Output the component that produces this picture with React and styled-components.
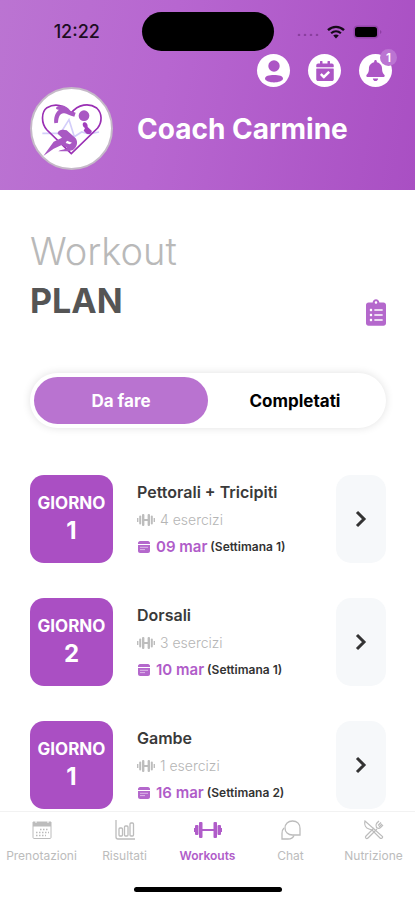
import React from "react";
import { useState } from "react";
import styled, { createGlobalStyle } from "styled-components";
import { FaBell, FaCalendarCheck, FaClipboardList } from "react-icons/fa";

const coachName = "Coach Carmine";

const workouts = [
  { id: 1, day: 1, name: "Pettorali + Tricipiti", exercises: 4, date: "09 mar", week: 1 },
  { id: 2, day: 2, name: "Dorsali", exercises: 3, date: "10 mar", week: 1 },
  { id: 3, day: 1, name: "Gambe", exercises: 1, date: "16 mar", week: 2 },
];

const filters = ["Da fare", "Completati"];

const CoachLogo = () => (
  <svg width="79" height="79" viewBox="7 5 237 237" fill="none" aria-hidden="true">
    <path d="M38 138H92L118 97L134 148L156 134L178 140L208 134" stroke="#d3cefa" strokeWidth="5" />
    <path
      d="M125 199L52 128C34 108 34 74 52 61C76 47 104 52 124 78C146 50 178 46 201 62C218 78 218 104 204 122L125 199Z"
      stroke="#9a2fb4"
      strokeWidth="5"
    />
    <path
      d="M74 108C72 92 76 76 88 67C81 67 76 63 82 58C98 50 112 57 122 70L138 76L134 88C120 86 112 79 104 78C92 76 86 88 85 106Z"
      fill="#a958c3"
    />
    <circle cx="163" cy="85" r="16" fill="#a958c3" />
    <path
      d="M161 106C168 102 175 110 174 119L186 130C188 137 179 143 171 139L162 130L166 122C160 119 157 110 161 106Z"
      fill="#a240bc"
    />
    <path
      fillRule="evenodd"
      d="M41 206L72 163L97 151L84 139C84 129 98 125 111 129L138 153C146 165 142 179 130 188L116 192L86 192C92 186 104 188 113 182L96 173L72 184ZM112 160L108 167L120 171L127 166Z"
      fill="#a958c3"
    />
  </svg>
);

const ProfileIcon = () => (
  <svg width="20" height="24" viewBox="0 0 20 24" fill="currentColor" aria-hidden="true">
    <circle cx="10" cy="7" r="5.7" />
    <path d="M1 19.5C1 17 5 16 10 16S19 17 19 19.5C19 22 14 23.4 10 23.4S1 22 1 19.5Z" />
  </svg>
);

const WifiIcon = () => (
  <svg width="18" height="14" viewBox="0 0 18 14" fill="none" stroke="#150a18" aria-hidden="true">
    <path d="M1 5.2C5.6 .8 12.4 .8 17 5.2" strokeWidth="2.4" />
    <path d="M4.1 8.3C7 5.7 11 5.7 13.9 8.3" strokeWidth="2.2" />
    <path d="M6.2 10.6C7.8 9.2 10.2 9.2 11.8 10.6L9 13.4Z" fill="#150a18" stroke="none" />
  </svg>
);

const BatteryIcon = () => (
  <svg width="29" height="14" viewBox="0 0 29 14" aria-hidden="true">
    <rect x=".5" y=".5" width="25" height="13" rx="4" fill="#9446aa" />
    <rect x="2" y="2" width="22" height="10" rx="2.5" fill="#000" />
    <path d="M27 5C29 6 29 8 27 9Z" fill="#8d3da3" />
  </svg>
);

const SignalDots = () => (
  <svg width="22" height="8" viewBox="0 0 22 8" fill="#8a3f9f" aria-hidden="true">
    <circle cx="2" cy="7" r="1.3" />
    <circle cx="8" cy="7" r="1.3" />
    <circle cx="14" cy="7" r="1.3" />
    <circle cx="20" cy="7" r="1.3" />
  </svg>
);

const WeightIcon = () => (
  <svg width="18" height="14" viewBox="0 0 18 14" fill="#bdbdbd" aria-hidden="true">
    <rect x="0" y="5" width="1.4" height="4" />
    <rect x="2.2" y="2.5" width="2" height="9" rx="1" />
    <rect x="5" y="1" width="2.4" height="12" rx="1" />
    <rect x="7" y="6" width="4" height="2" />
    <rect x="10.6" y="1" width="2.4" height="12" rx="1" />
    <rect x="13.8" y="2.5" width="2" height="9" rx="1" />
    <rect x="16.6" y="5" width="1.4" height="4" />
  </svg>
);

const DateIcon = () => (
  <svg width="14" height="14" viewBox="0 0 14 14" aria-hidden="true">
    <path d="M1 4V3C1 2 2 1 3 1H11C12 1 13 2 13 3V4Z" fill="#b468cc" />
    <path d="M1 5H13V11C13 12 12 13 11 13H3C2 13 1 12 1 11Z" fill="#b468cc" />
    <path d="M3 7.3H11M3 9.6H8" stroke="#dcb8e8" />
  </svg>
);

const ArrowIcon = () => (
  <svg width="12" height="18" viewBox="0 0 12 18" fill="none" stroke="#333" strokeWidth="3" aria-hidden="true">
    <path d="M2 2L9 9L2 16" />
  </svg>
);

const BookingsIcon = () => (
  <svg width="20" height="20" viewBox="0 0 20 20" fill="none" stroke="currentColor" aria-hidden="true">
    <path d="M1 2H19V6H1Z" fill="currentColor" />
    <path d="M1 6V17.5C1 18 1.5 18.5 2 18.5H18C18.5 18.5 19 18 19 17.5V6" />
    <path d="M4 1V3M16 1V3" stroke="#fff" />
    <path d="M8 9.5H17M4 12.5H17M4 15.5H14" strokeWidth="1.5" strokeDasharray="1.5 1.5" />
  </svg>
);

const ResultsIcon = () => (
  <svg width="20" height="20" viewBox="0 0 20 20" fill="none" stroke="currentColor" strokeWidth="1.3" aria-hidden="true">
    <path d="M1 0V17C1 18.5 2 19 3 19H20" />
    <rect x="4" y="8" width="3.5" height="8" rx="1" />
    <rect x="9.5" y="6" width="3.5" height="10" rx="1" />
    <rect x="15" y="3" width="3.5" height="13" rx="1" />
  </svg>
);

const WorkoutsIcon = () => (
  <svg width="28" height="18" viewBox="0 0 28 18" fill="currentColor" aria-hidden="true">
    <rect x="0" y="7" width="2" height="4" />
    <rect x="1" y="4" width="3.5" height="10" rx="1" />
    <rect x="5" y="1" width="3.5" height="16" rx="1" />
    <rect x="8" y="8" width="12" height="2" />
    <rect x="19.5" y="1" width="3.5" height="16" rx="1" />
    <rect x="23.5" y="4" width="3.5" height="10" rx="1" />
    <rect x="26" y="7" width="2" height="4" />
  </svg>
);

const ChatIcon = () => (
  <svg width="20" height="20" viewBox="0 0 20 20" fill="none" stroke="currentColor" strokeWidth="1.3" aria-hidden="true">
    <path d="M11.5 1C16 1 19 4 19 8.500V15H11.5C7 15 4 12 4 8S7 1 11.5 1Z" />
    <path d="M3 8C.8 10 1 12 1 14V19H7C10 19 12 18 13 15.5" />
  </svg>
);

const NutritionIcon = () => (
  <svg width="20" height="20" viewBox="0 0 20 20" fill="none" stroke="currentColor" strokeWidth="1.2" aria-hidden="true">
    <path d="M1 1C0 5 2 8 5 9L8 10L16 18C17 19 19 18 18.5 16.5L1 1Z" />
    <path d="M13 9L4 18C2.5 19.5 .5 17.5 2 16L10 8" />
    <path d="M15 1L12.5 3.5C11.5 5 12 6.5 12.5 7.5C14 8.5 15.5 8.5 16.5 7.5L19 5" />
    <path d="M17 2.5L14 5.5M18 4L15 7" />
  </svg>
);

const tabs = [
  { label: "Prenotazioni", Icon: BookingsIcon },
  { label: "Risultati", Icon: ResultsIcon },
  { label: "Workouts", Icon: WorkoutsIcon },
  { label: "Chat", Icon: ChatIcon },
  { label: "Nutrizione", Icon: NutritionIcon },
];

const App = () => {
  const [filter, setFilter] = useState(filters[0]);
  const [activeTab, setActiveTab] = useState("Workouts");

  const onTabClicked = (event, label) => {
    event.preventDefault();
    setActiveTab(label);
  };

  return (
    <PageContainer>
      <GlobalStyle />
      <Header>
        <StatusBar>
          <Clock>12:22</Clock>
          <Island />
          <StatusIcons>
            <SignalDots />
            <WifiIcon />
            <BatteryIcon />
          </StatusIcons>
        </StatusBar>
        <HeaderActions>
          <RoundButton aria-label="Profilo">
            <ProfileIcon />
          </RoundButton>
          <RoundButton aria-label="Calendario">
            <FaCalendarCheck size={20} />
          </RoundButton>
          <RoundButton aria-label="Notifiche">
            <FaBell size={21} />
            <Badge>1</Badge>
          </RoundButton>
        </HeaderActions>
        <CoachRow>
          <LogoCircle>
            <CoachLogo />
          </LogoCircle>
          <CoachName>{coachName}</CoachName>
        </CoachRow>
      </Header>

      <Content>
        <TitleRow>
          <PageTitle>
            <TitleLight>Workout</TitleLight>
            <TitleBold>PLAN</TitleBold>
          </PageTitle>
          <PlanButton aria-label="Scheda">
            <FaClipboardList />
          </PlanButton>
        </TitleRow>

        <FilterSwitch>
          {filters.map((label) => (
            <FilterButton
              key={label}
              $active={label === filter}
              aria-pressed={label === filter}
              onClick={() => setFilter(label)}
            >
              {label}
            </FilterButton>
          ))}
        </FilterSwitch>

        <WorkoutList>
          {workouts.map((workout) => (
            <WorkoutRow key={workout.id}>
              <DayCard>
                <DayLabel>GIORNO</DayLabel>
                <DayNumber>{workout.day}</DayNumber>
              </DayCard>
              <WorkoutInfo>
                <WorkoutName>{workout.name}</WorkoutName>
                <ExerciseLine>
                  <WeightIcon />
                  {workout.exercises} esercizi
                </ExerciseLine>
                <DateLine>
                  <DateIcon />
                  <DateText>{workout.date}</DateText>
                  <WeekText>(Settimana {workout.week})</WeekText>
                </DateLine>
              </WorkoutInfo>
              <OpenButton aria-label={`Apri ${workout.name}`}>
                <ArrowIcon />
              </OpenButton>
            </WorkoutRow>
          ))}
        </WorkoutList>
      </Content>

      <BottomBar>
        <TabList>
          {tabs.map(({ label, Icon }) => (
            <TabLink
              key={label}
              href="#"
              $active={label === activeTab}
              onClick={(event) => onTabClicked(event, label)}
            >
              <TabIcon>
                <Icon />
              </TabIcon>
              {label}
            </TabLink>
          ))}
        </TabList>
        <HomeIndicator />
      </BottomBar>
    </PageContainer>
  );
};

export default App;

const GlobalStyle = createGlobalStyle`
  * {
    box-sizing: border-box;
  }

  body {
    margin: 0;
    background: white;
    font-family: Inter, "Open Sans", sans-serif;
  }

  button {
    border: none;
    padding: 0;
    font-family: inherit;
    cursor: pointer;
  }

  svg {
    display: block;
    flex-shrink: 0;
  }
`;

const PageContainer = styled.div`
  display: flex;
  flex-direction: column;
  height: 100vh;
`;

const Header = styled.header`
  display: flex;
  flex-direction: column;
  flex-shrink: 0;
  padding-bottom: 20px;
  background: linear-gradient(100deg, #bb74d2 0%, #b766d0 40%, #a94fc3 100%);
`;

const StatusBar = styled.div`
  display: grid;
  grid-template-columns: 1fr 132px 1fr;
  align-items: center;
  height: 54px;
  padding-top: 9px;
`;

const Clock = styled.div`
  padding-left: 12px;
  font-size: 18px;
  font-weight: 500;
  text-align: center;
  color: #1d0d22;
`;

const Island = styled.div`
  height: 39px;
  border-radius: 20px;
  background: black;
`;

const StatusIcons = styled.div`
  display: flex;
  align-items: center;
  justify-content: flex-end;
  gap: 8px;
  padding-right: 33px;
`;

const HeaderActions = styled.div`
  display: flex;
  justify-content: flex-end;
  gap: 18px;
  padding-right: 23px;
`;

const RoundButton = styled.button`
  position: relative;
  display: flex;
  align-items: center;
  justify-content: center;
  width: 33px;
  height: 33px;
  border-radius: 50%;
  background: white;
  color: #ac55c5;
`;

const Badge = styled.span`
  position: absolute;
  top: -5px;
  right: -5px;
  width: 17px;
  height: 17px;
  border-radius: 50%;
  background: #bb74d2;
  color: white;
  font-size: 12px;
  font-weight: 600;
  line-height: 17px;
  text-align: center;
`;

const CoachRow = styled.div`
  display: flex;
  align-items: center;
  gap: 24px;
  padding: 0 30px;
`;

const LogoCircle = styled.div`
  display: flex;
  align-items: center;
  justify-content: center;
  width: 83px;
  height: 83px;
  border: 2px solid #c5b9c8;
  border-radius: 50%;
  background: white;
`;

const CoachName = styled.div`
  font-size: 28px;
  font-weight: 700;
  color: white;
`;

const Content = styled.main`
  flex: 1;
  min-height: 0;
  padding: 36px 29px 0 30px;
  overflow-y: auto;
  scrollbar-width: none;
`;

const TitleRow = styled.div`
  display: flex;
  align-items: flex-end;
  justify-content: space-between;
`;

const PageTitle = styled.h1`
  display: flex;
  flex-direction: column;
  margin: 0;
  line-height: 50px;
`;

const TitleLight = styled.span`
  font-size: 38px;
  font-weight: 300;
  color: #b9b9b9;
`;

const TitleBold = styled.span`
  font-size: 34px;
  font-weight: 700;
  color: #555;
`;

const PlanButton = styled.button`
  background: none;
  color: #b468cc;

  svg {
    width: 20px;
    height: 27px;
  }
`;

const FilterSwitch = styled.div`
  display: grid;
  grid-template-columns: 1fr 1fr;
  height: 55px;
  margin-top: 47px;
  padding: 4px;
  border-radius: 28px;
  background: white;
  box-shadow: 0 0 9px rgba(0, 0, 0, 0.12);
`;

const FilterButton = styled.button`
  border-radius: 24px;
  background: ${(props) => (props.$active ? "#b973d0" : "transparent")};
  color: ${(props) => (props.$active ? "white" : "black")};
  font-size: 17px;
  font-weight: 700;
`;

const WorkoutList = styled.div`
  display: flex;
  flex-direction: column;
  gap: 35px;
  margin-top: 47px;
`;

const WorkoutRow = styled.div`
  display: flex;
  align-items: stretch;
  height: 88px;
`;

const DayCard = styled.div`
  display: flex;
  flex-direction: column;
  align-items: center;
  justify-content: center;
  width: 83px;
  padding-bottom: 4px;
  border-radius: 14px;
  background: #aa4fc3;
  color: white;
  font-weight: 700;
  line-height: 28px;
`;

const DayLabel = styled.div`
  font-size: 17px;
`;

const DayNumber = styled.div`
  font-size: 24px;
`;

const WorkoutInfo = styled.div`
  display: flex;
  flex: 1;
  flex-direction: column;
  justify-content: center;
  padding: 1px 0 0 24px;
  line-height: 27px;
  white-space: nowrap;
`;

const WorkoutName = styled.div`
  font-size: 16px;
  font-weight: 600;
  color: #3a3a3a;
`;

const ExerciseLine = styled.div`
  display: flex;
  align-items: center;
  gap: 5px;
  font-size: 14px;
  font-weight: 300;
  color: #b5b5b5;
`;

const DateLine = styled.div`
  display: flex;
  align-items: center;
`;

const DateText = styled.span`
  margin: 0 3px 0 5px;
  font-size: 15px;
  font-weight: 600;
  color: #b05cc9;
`;

const WeekText = styled.span`
  font-size: 12px;
  font-weight: 600;
  color: #333;
`;

const OpenButton = styled.button`
  display: flex;
  align-items: center;
  justify-content: center;
  width: 50px;
  border-radius: 15px;
  background: #f6f8fa;
`;

const BottomBar = styled.footer`
  display: flex;
  flex-direction: column;
  flex-shrink: 0;
  align-items: center;
  padding-bottom: 8px;
  border-top: 1px solid #f2f2f2;
  background: white;
`;

const TabList = styled.nav`
  display: grid;
  grid-template-columns: repeat(5, 1fr);
  width: 100%;
`;

const TabLink = styled.a`
  display: flex;
  flex-direction: column;
  align-items: center;
  padding-top: 5px;
  color: ${(props) => (props.$active ? "#b05cc9" : "#bcbcbc")};
  font-size: 12px;
  font-weight: ${(props) => (props.$active ? 600 : 400)};
  line-height: 25px;
  text-decoration: none;
`;

const TabIcon = styled.span`
  display: flex;
  align-items: center;
  height: 26px;
`;

const HomeIndicator = styled.div`
  width: 148px;
  height: 5px;
  margin-top: 19px;
  border-radius: 3px;
  background: black;
`;
